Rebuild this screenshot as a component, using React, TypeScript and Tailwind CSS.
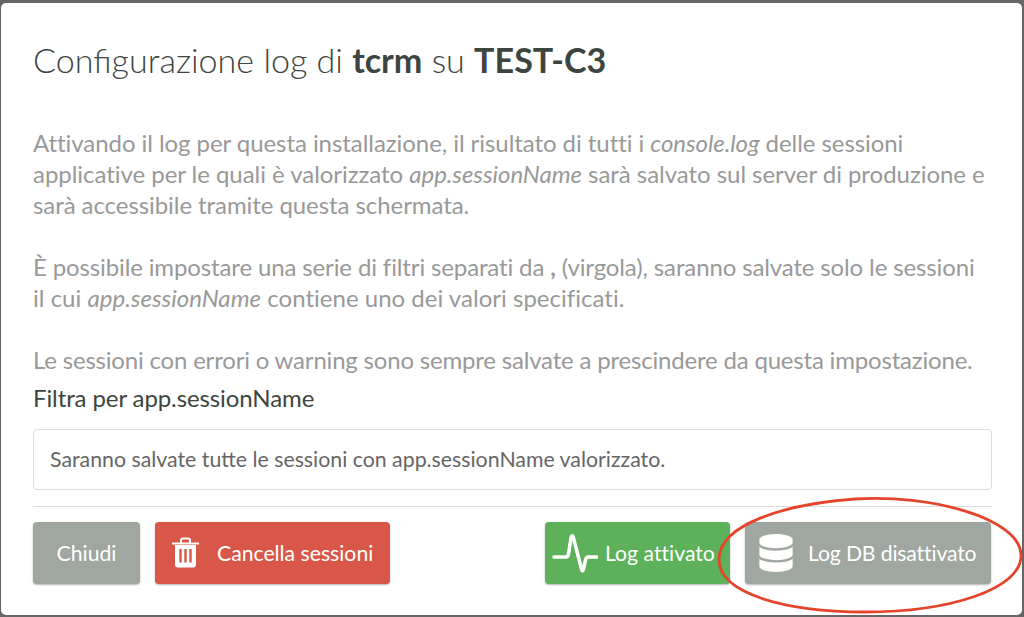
import { FaDatabase } from 'react-icons/fa';

function TrashIcon() {
  return (
    <svg width="29" height="32" viewBox="0 0 29 32" fill="none" stroke="white">
      <path d="M1 6.500h27" strokeWidth="2" />
      <path d="M10 6V3.200C10 2 11 1.500 12 1.500h5c1 0 2 .5 2 1.700V6" strokeWidth="2" />
      <path d="M4 8v20c0 1.500 1 2.500 2.500 2.500h16c1.500 0 2.500-1 2.500-2.500V8z" fill="white" strokeWidth="0" />
      <path d="M9.500 12v13.500M14.500 12v13.500M19.500 12v13.500" stroke="#d85748" strokeWidth="2.400" />
    </svg>
  );
}

function PulseIcon() {
  return (
    <svg width="46" height="42" viewBox="0 0 46 42" fill="none" stroke="white" strokeWidth="3.500" strokeLinecap="round" strokeLinejoin="round">
      <path d="M2 25h12c1.500 0 2-1 2.500-3L19 6c.5-3 2-3 2.500 0l8 31c.5 2.500 1.500 2.500 2 0l2-9c.5-2 1-3 2.500-3H45" />
    </svg>
  );
}

export default function App() {
  return (
    <div className="h-[617px] w-[1024px] overflow-hidden bg-[#666666] pt-[3px] pb-[2px] pl-[1px] pr-[2px] font-['Lato',sans-serif]">
      <div className="relative flex h-[612px] flex-col rounded-[5px] bg-white px-[32px]">
        <h1 className="mt-[35px] h-[44px] text-[34.100px] leading-[44px] font-light whitespace-nowrap text-[#3d4540]">
          Configurazione log di <b className="font-bold">tcrm</b> su <b className="font-bold">TEST-C3</b>
        </h1>

        <div className="mt-[45px] text-[24px] leading-[31px] whitespace-nowrap text-[#999999]">
          <p className="mb-[31px]">
            <span className="tracking-[-0.06px]">
              Attivando il log per questa installazione, il risultato di tutti i <i>console.log</i> delle sessioni
            </span>
            <br />
            <span className="tracking-[-0.04px]">
              applicative per le quali è valorizzato <i>app.sessionName</i> sarà salvato sul server di produzione e
            </span>
            <br />
            <span className="tracking-[-0.07px]">sarà accessibile tramite questa schermata.</span>
          </p>
          <p className="mb-[31px]">
            <span className="tracking-[-0.13px]">
              È possibile impostare una serie di filtri separati da <b className="font-bold">,</b> (virgola), saranno salvate solo le sessioni
            </span>
            <br />
            <span className="tracking-[0.02px]">
              il cui <i>app.sessionName</i> contiene uno dei valori specificati.
            </span>
          </p>
          <p className="tracking-[-0.19px]">Le sessioni con errori o warning sono sempre salvate a prescindere da questa impostazione.</p>
        </div>

        <label className="mt-[7px] text-[24px] leading-[31px] tracking-[-0.1px] text-[#3d4540]">Filtra per app.sessionName</label>

        <div className="mt-[16px] flex h-[61px] w-[959px] items-center rounded-[4px] border border-[#dddddd] px-[16px] text-[21.300px] text-[#666666]">
          Saranno salvate tutte le sessioni con app.sessionName valorizzato.
        </div>

        <div className="mt-[16px] h-px w-[959px] bg-[#dddddd]" />

        <div className="mt-[15px] flex h-[62px] w-[959px] items-stretch text-[21.200px] text-white [font-variant-ligatures:none]">
          <button className="w-[107px] rounded-[4px] bg-[#a0a6a0] pt-[2px] shadow-[0_1px_2px_rgba(0,0,0,0.3)]">Chiudi</button>
          <button className="ml-[15px] flex w-[235px] items-center rounded-[4px] bg-[#d85748] pl-[16px] shadow-[0_1px_2px_rgba(0,0,0,0.3)]">
            <TrashIcon />
            <span className="ml-[17px] pt-[2px]">Cancella sessioni</span>
          </button>
          <button className="ml-[155px] flex w-[185px] items-center rounded-[4px] bg-[#5cb15a] pl-[7px] shadow-[0_1px_2px_rgba(0,0,0,0.3)]">
            <PulseIcon />
            <span className="ml-[7px] pt-[2px]">Log attivato</span>
          </button>
          <button className="ml-[15px] flex w-[246px] items-center rounded-[4px] bg-[#a0a6a0] pl-[12px] shadow-[0_1px_2px_rgba(0,0,0,0.3)]">
            <FaDatabase size={38} />
            <span className="ml-[13px] pt-[2px] tracking-[-0.15px]">Log DB disattivato</span>
          </button>
        </div>

        <svg className="absolute top-[491px] left-[714px] h-[122px] w-[308px]" viewBox="0 0 308 122" fill="none">
          <path d="M4 64C6 30 70 10 140 5C215 0 304 24 306 60C308 96 232 118 150 118C72 118 2 100 4 64Z" stroke="#e5432a" strokeWidth="2.800" />
        </svg>
      </div>
    </div>
  );
}
